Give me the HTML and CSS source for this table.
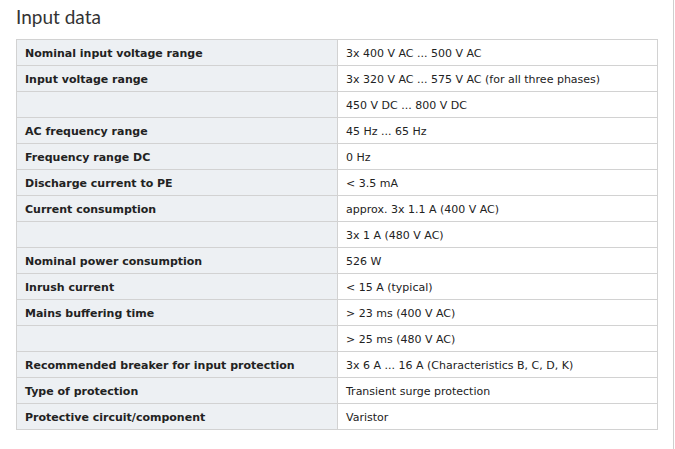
FILE: index.html
```html
<!DOCTYPE html>
<html>
<head>
<meta charset="utf-8">
<link rel="stylesheet" href="styles.css">
</head>
<body>
<div class="page">
  <h2 class="title">Input data</h2>
  <table class="specs">
    <tr><th>Nominal input voltage range</th><td>3x 400 V AC ... 500 V AC</td></tr>
    <tr><th>Input voltage range</th><td>3x 320 V AC ... 575 V AC (for all three phases)</td></tr>
    <tr><th></th><td>450 V DC ... 800 V DC</td></tr>
    <tr><th>AC frequency range</th><td>45 Hz ... 65 Hz</td></tr>
    <tr><th>Frequency range DC</th><td>0 Hz</td></tr>
    <tr><th>Discharge current to PE</th><td>&lt; 3.5 mA</td></tr>
    <tr><th>Current consumption</th><td>approx. 3x 1.1 A (400 V AC)</td></tr>
    <tr><th></th><td>3x 1 A (480 V AC)</td></tr>
    <tr><th>Nominal power consumption</th><td>526 W</td></tr>
    <tr><th>Inrush current</th><td>&lt; 15 A (typical)</td></tr>
    <tr><th>Mains buffering time</th><td>&gt; 23 ms (400 V AC)</td></tr>
    <tr><th></th><td>&gt; 25 ms (480 V AC)</td></tr>
    <tr><th>Recommended breaker for input protection</th><td>3x 6 A ... 16 A (Characteristics B, C, D, K)</td></tr>
    <tr><th>Type of protection</th><td>Transient surge protection</td></tr>
    <tr><th>Protective circuit/component</th><td>Varistor</td></tr>
  </table>
</div>
</body>
</html>
```
FILE: styles.css
```css
html, body {
  margin: 0;
  padding: 0;
  background: #fff;
}
.page {
  box-sizing: border-box;
  width: 674px;
  height: 449px;
  border-right: 1px solid #cfcfcf;
  padding: 4px 0 0 16px;
}
.title {
  margin: 0;
  font-family: Lato, "Open Sans", sans-serif;
  font-weight: 400;
  font-size: 19px;
  line-height: 26px;
  color: #333;
}
.specs {
  margin-top: 9px;
  border-collapse: collapse;
  width: 642px;
  font-family: "DejaVu Sans", Verdana, sans-serif;
  font-size: 11px;
  color: #222;
}
.specs th, .specs td {
  box-sizing: border-box;
  height: 26px;
  padding: 2px 8px 0;
  border: 1px solid #d2d2d2;
  text-align: left;
  vertical-align: middle;
}
.specs th {
  width: 321px;
  background: #edf0f3;
  font-weight: bold;
}
.specs td {
  background: #fff;
  font-weight: normal;
}
```
